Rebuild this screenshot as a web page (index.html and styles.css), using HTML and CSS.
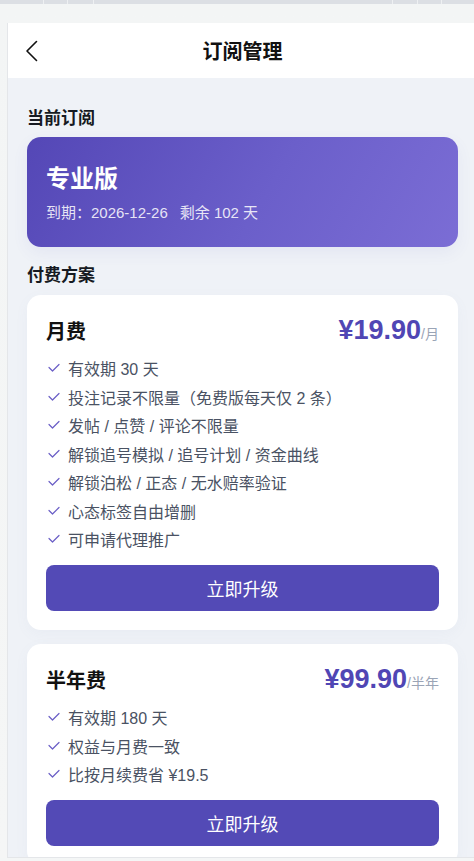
FILE: index.html
```html
<!DOCTYPE html>
<html lang="zh-CN">
<head>
<meta charset="utf-8">
<title>订阅管理</title>
<link rel="stylesheet" href="styles.css">
</head>
<body>
<div class="topstrip">
  <span class="sep s1"></span><span class="sep s2"></span><span class="sep s3"></span>
  <span class="grow"></span>
  <span class="sep s4"></span><span class="sep s5"></span><span class="sep s6"></span>
</div>
<div class="stage">
  <div class="frame">
    <header class="header">
      <div class="back">
        <svg width="14" height="22" viewBox="0 0 14 22"><path d="M11.5 1.5 L2 11 L11.5 20.5" fill="none" stroke="#111" stroke-width="1.6" stroke-linecap="round" stroke-linejoin="round"/></svg>
      </div>
      <h1 class="title">订阅管理</h1>
      <div></div>
    </header>
    <main class="content">
      <h2 class="section-label">当前订阅</h2>
      <div class="current">
        <div class="current-name">专业版</div>
        <div class="current-meta"><span>到期：2026-12-26</span><span class="remain">剩余 102 天</span></div>
      </div>
      <h2 class="section-label second">付费方案</h2>
      <div class="plans">
        <section class="plan">
          <div class="plan-head">
            <div class="plan-name">月费</div>
            <div class="price"><span class="amount">¥19.90</span><span class="unit">/月</span></div>
          </div>
          <ul class="features">
            <li><svg class="check" viewBox="0 0 12 10"><path d="M1 4.5 L4.5 8 L11 1.5" fill="none" stroke="#6a5ec6" stroke-width="1.2" stroke-linecap="round" stroke-linejoin="round"/></svg>有效期 30 天</li>
            <li><svg class="check" viewBox="0 0 12 10"><path d="M1 4.5 L4.5 8 L11 1.5" fill="none" stroke="#6a5ec6" stroke-width="1.2" stroke-linecap="round" stroke-linejoin="round"/></svg>投注记录不限量（免费版每天仅 2 条）</li>
            <li><svg class="check" viewBox="0 0 12 10"><path d="M1 4.5 L4.5 8 L11 1.5" fill="none" stroke="#6a5ec6" stroke-width="1.2" stroke-linecap="round" stroke-linejoin="round"/></svg>发帖 / 点赞 / 评论不限量</li>
            <li><svg class="check" viewBox="0 0 12 10"><path d="M1 4.5 L4.5 8 L11 1.5" fill="none" stroke="#6a5ec6" stroke-width="1.2" stroke-linecap="round" stroke-linejoin="round"/></svg>解锁追号模拟 / 追号计划 / 资金曲线</li>
            <li><svg class="check" viewBox="0 0 12 10"><path d="M1 4.5 L4.5 8 L11 1.5" fill="none" stroke="#6a5ec6" stroke-width="1.2" stroke-linecap="round" stroke-linejoin="round"/></svg>解锁泊松 / 正态 / 无水赔率验证</li>
            <li><svg class="check" viewBox="0 0 12 10"><path d="M1 4.5 L4.5 8 L11 1.5" fill="none" stroke="#6a5ec6" stroke-width="1.2" stroke-linecap="round" stroke-linejoin="round"/></svg>心态标签自由增删</li>
            <li><svg class="check" viewBox="0 0 12 10"><path d="M1 4.5 L4.5 8 L11 1.5" fill="none" stroke="#6a5ec6" stroke-width="1.2" stroke-linecap="round" stroke-linejoin="round"/></svg>可申请代理推广</li>
          </ul>
          <button class="upgrade">立即升级</button>
        </section>
        <section class="plan">
          <div class="plan-head">
            <div class="plan-name">半年费</div>
            <div class="price"><span class="amount">¥99.90</span><span class="unit">/半年</span></div>
          </div>
          <ul class="features">
            <li><svg class="check" viewBox="0 0 12 10"><path d="M1 4.5 L4.5 8 L11 1.5" fill="none" stroke="#6a5ec6" stroke-width="1.2" stroke-linecap="round" stroke-linejoin="round"/></svg>有效期 180 天</li>
            <li><svg class="check" viewBox="0 0 12 10"><path d="M1 4.5 L4.5 8 L11 1.5" fill="none" stroke="#6a5ec6" stroke-width="1.2" stroke-linecap="round" stroke-linejoin="round"/></svg>权益与月费一致</li>
            <li><svg class="check" viewBox="0 0 12 10"><path d="M1 4.5 L4.5 8 L11 1.5" fill="none" stroke="#6a5ec6" stroke-width="1.2" stroke-linecap="round" stroke-linejoin="round"/></svg>比按月续费省 ¥19.5</li>
          </ul>
          <button class="upgrade">立即升级</button>
        </section>
      </div>
    </main>
  </div>
</div>
</body>
</html>
```

FILE: styles.css
```css
html, body {
  margin: 0;
  padding: 0;
  overflow: hidden;
  height: 100%;
}
body {
  background: #f4f6f6;
  font-family: "Liberation Sans", "Noto Sans CJK SC", sans-serif;
  color: #111;
}
.topstrip {
  height: 4px;
  background: #dcdfe4;
  display: flex;
}
.sep {
  width: 1px;
  height: 4px;
  background: #eef0f2;
}
.s1 { margin-left: 43px; }
.s2 { margin-left: 23px; }
.s3 { margin-left: 25px; }
.grow { flex: 1; }
.s5 { margin-left: 24px; }
.s6 { margin-left: 23px; margin-right: 32px; }
.stage {
  padding-top: 19px;
  background: linear-gradient(180deg, #f3f5f5 0%, #f5f6f6 100%);
}
.frame {
  margin-left: 7px;
  width: 469px;
  height: 834px;
  border-left: 1px solid #e4e6e9;
  border-bottom: 1px solid #e4e6e9;
  overflow: hidden;
  background: #eff2f7;
  display: flex;
  flex-direction: column;
}
.header {
  height: 55px;
  flex: none;
  background: #fff;
  display: grid;
  grid-template-columns: 1fr auto 1fr;
  align-items: center;
}
.back {
  padding-left: 17px;
  display: flex;
  align-items: center;
}
.title {
  margin: 0;
  font-size: 20px;
  font-weight: 700;
  color: #111;
}
.content {
  padding: 30px 19px 0;
}
.section-label {
  margin: 0 0 7px;
  font-size: 17px;
  line-height: 22px;
  font-weight: 700;
  color: #161a22;
}
.section-label.second {
  margin-top: 18px;
  margin-bottom: 8px;
}
.current {
  border-radius: 14px;
  padding: 26px 19px 24px;
  background: linear-gradient(120deg, #5447b6 0%, #6b5fca 55%, #7b6dd5 100%);
  box-shadow: 0 6px 16px rgba(90, 80, 180, 0.07);
  color: #fff;
}
.current-name {
  font-size: 24px;
  line-height: 32px;
  font-weight: 700;
}
.current-meta {
  margin-top: 8px;
  font-size: 15px;
  line-height: 20px;
  color: rgba(255, 255, 255, 0.86);
}
.remain {
  margin-left: 12px;
}
.plans {
  display: flex;
  flex-direction: column;
  gap: 14px;
}
.plan {
  background: #fff;
  border-radius: 14px;
  padding: 19px;
  box-shadow: 0 4px 14px rgba(120, 130, 170, 0.05);
}
.plan-head {
  height: 32px;
  display: flex;
  align-items: center;
  justify-content: space-between;
}
.plan-name {
  font-size: 20px;
  font-weight: 700;
  color: #111;
}
.price {
  display: flex;
  align-items: baseline;
}
.amount {
  font-size: 27px;
  font-weight: 700;
  color: #5046b4;
}
.unit {
  font-size: 14px;
  color: #9aa4b6;
}
.features {
  list-style: none;
  margin: 8px 0 0;
  padding: 0;
}
.features li {
  height: 28.5px;
  display: flex;
  align-items: center;
  font-size: 16px;
  color: #4a5263;
}
.check {
  width: 12px;
  height: 10px;
  margin-left: 2px;
  margin-right: 8px;
  flex: none;
}
.upgrade {
  display: block;
  width: 100%;
  height: 46px;
  margin-top: 11.5px;
  border: 0;
  border-radius: 8px;
  background: #534ab6;
  color: #fff;
  font-family: "Liberation Sans", "Noto Sans CJK SC", sans-serif;
  font-size: 18px;
  cursor: pointer;
}
```
